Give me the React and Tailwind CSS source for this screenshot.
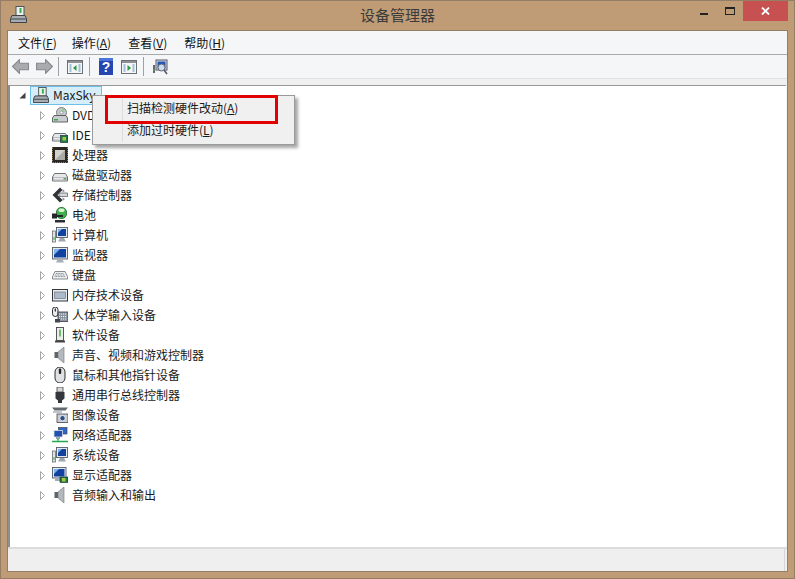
const font = { fontFamily: '"Noto Sans CJK SC", "Liberation Sans", sans-serif' };

const Computer = () => (
  <svg width="16" height="16" viewBox="0 0 16 16">
    <rect x="0.500" y="4" width="3" height="11" fill="#dfe5df" stroke="#6a6f74" strokeWidth=".8" />
    <rect x="1.500" y="10" width="1" height="3" fill="#35b04a" />
    <rect x="4.500" y="0.500" width="11" height="10" fill="#e4e9ef" stroke="#565c66" strokeWidth=".9" />
    <rect x="6" y="2" width="8" height="7" fill="#12429f" />
    <path d="M6 2h4l-4 4z" fill="#7fb4ee" />
    <path d="M8 11h4l2 3.500h-8z" fill="#9ea6b0" />
  </svg>
);
const Drive = ({ chip }) => (
  <svg width="16" height="16" viewBox="0 0 16 16">
    <path d="M2.500 6.500h11l2 3.500v4h-15v-4z" fill="#e6e8ea" stroke="#5f6468" strokeWidth=".9" />
    <rect x="1" y="10" width="14" height="3.500" fill="#b9bdc1" />
    <rect x="2" y="11" width="9" height="1.500" fill="#e8eaec" />
    <rect x="12" y="11" width="2" height="1.500" fill="#6f9a66" />
    {chip && <rect x="8.500" y="8.500" width="7.500" height="7" fill="#1f7a48" stroke="#123" strokeWidth=".6" />}
    {chip && <rect x="10.500" y="10" width="3.500" height="3.500" fill="#a6c83c" />}
  </svg>
);
const icons = {
  dvd: (
    <svg width="16" height="16" viewBox="0 0 16 16">
      <circle cx="9.500" cy="5.500" r="5" fill="#c4cacf" stroke="#666" strokeWidth=".8" />
      <path d="M9.500 1a4.500 4.500 0 0 1 4 3l-3 1z" fill="#8fd08f" />
      <circle cx="9.500" cy="5.500" r="1.500" fill="#fff" stroke="#777" strokeWidth=".6" />
      <path d="M2 8.500h12l1.500 2.500v4h-15v-4z" fill="#c9ccd0" stroke="#555" strokeWidth=".9" />
      <rect x="2" y="12" width="4" height="1.500" fill="#3aa84c" />
    </svg>
  ),
  ide: <Drive chip />,
  cpu: (
    <svg width="16" height="16" viewBox="0 0 16 16">
      <rect x="0" y="0" width="16" height="16" rx="1" fill="#2a2724" />
      <path d="M1 15.500h14M.5 1v14M15.500 1v14" stroke="#b89b52" strokeDasharray="1 1" strokeWidth=".8" />
      <rect x="3" y="3" width="10" height="10" fill="#a9a9a5" />
      <path d="M3 3h10l-10 10z" fill="#d2d2ce" />
    </svg>
  ),
  disk: <Drive />,
  storage: (
    <svg width="16" height="16" viewBox="0 0 16 16">
      <path d="M8 0.500l-7.500 7.500 7.500 7.500 2.500-2.500-5-5 5-5z" fill="#2f3338" />
      <path d="M7 6h8.500v3.500h-8.500z" fill="#d5d9dc" stroke="#555" strokeWidth=".7" />
      <path d="M10.500 2l2.500 2-2.500 1.500zM10.500 10.500l2.500 1.500-2.500 2z" fill="#8d9399" />
    </svg>
  ),
  battery: (
    <svg width="16" height="16" viewBox="0 0 16 16">
      <rect x="4.500" y="0.500" width="10" height="11" rx="4.500" fill="#3fb04a" stroke="#1f6a2c" strokeWidth=".8" />
      <rect x="6.500" y="1.500" width="6" height="3.500" rx="1.700" fill="#d6f2d0" />
      <path d="M0 6.500h5v5h-5zM5 8h6v2h-6z" fill="#23272a" />
      <path d="M3 13h10v2.500h-10z" fill="#2b2e31" />
    </svg>
  ),
  computer: <Computer />,
  monitor: (
    <svg width="16" height="16" viewBox="0 0 16 16">
      <rect x="0.500" y="0.500" width="15" height="11.500" fill="#e4e9ef" stroke="#565c66" strokeWidth=".9" />
      <rect x="2" y="2" width="12" height="8.500" fill="#12429f" />
      <path d="M2 2h6l-6 6z" fill="#7fb4ee" />
      <path d="M5.500 12.500h5l1.500 3h-8z" fill="#a5adb6" />
    </svg>
  ),
  keyboard: (
    <svg width="16" height="16" viewBox="0 0 16 16">
      <path d="M3 4.500h10l2.500 5v2.500h-15v-2.500z" fill="#eceef0" stroke="#6a6f74" strokeWidth=".8" />
      <path d="M4 6.500h8M3 8h10M2.500 9.500h11" stroke="#8a8f94" strokeWidth="1" strokeDasharray="1 .6" />
    </svg>
  ),
  memory: (
    <svg width="16" height="16" viewBox="0 0 16 16">
      <rect x="0.500" y="2.500" width="15" height="11.500" fill="#e6e9ec" stroke="#33383d" />
      <rect x="2.500" y="5" width="11" height="6.500" fill="#a9bac8" stroke="#667" strokeWidth=".6" />
    </svg>
  ),
  hid: (
    <svg width="16" height="16" viewBox="0 0 16 16">
      <rect x="0.500" y="0" width="5.500" height="9.500" rx="2.700" fill="#eceeef" stroke="#2c2f33" />
      <rect x="2.700" y="1.500" width="1.200" height="3" fill="#222" />
      <rect x="6" y="5" width="10" height="9.500" fill="#8d97a1" stroke="#334" strokeWidth=".8" />
      <path d="M7 7h8M7 9.500h8M7 12h8" stroke="#eef" strokeWidth="1" strokeDasharray="1 1" />
      <rect x="3" y="12" width="5" height="3.500" fill="#445" />
    </svg>
  ),
  software: (
    <svg width="16" height="16" viewBox="0 0 16 16">
      <rect x="4.500" y="0.500" width="7" height="13" fill="#eceeea" stroke="#444" strokeWidth=".9" />
      <rect x="7" y="2.500" width="2" height="7" fill="#68c070" />
      <rect x="3" y="13.500" width="10" height="2" fill="#444" />
    </svg>
  ),
  sound: (
    <svg width="16" height="16" viewBox="0 0 16 16">
      <rect x="2.500" y="5" width="3.500" height="6" fill="#5d6369" />
      <path d="M6 5l6-5v16l-6-5z" fill="#b4b9be" stroke="#6c7278" strokeWidth=".6" />
    </svg>
  ),
  mouse: (
    <svg width="16" height="16" viewBox="0 0 16 16">
      <path d="M3 5a5 5 0 0 1 10 0v6a5 5 0 0 1-10 0z" fill="#dfe1e3" stroke="#2c2f33" />
      <rect x="6.800" y="1.500" width="2.400" height="5.500" rx="1" fill="#222" />
    </svg>
  ),
  usb: (
    <svg width="16" height="16" viewBox="0 0 16 16">
      <rect x="5" y="0" width="6" height="5" fill="#d4d6d8" stroke="#444" strokeWidth=".8" />
      <path d="M3.500 5h9v6.500l-2.500 2v2.500h-4v-2.500l-2.500-2z" fill="#33373b" />
    </svg>
  ),
  image: (
    <svg width="16" height="16" viewBox="0 0 16 16">
      <path d="M0 0.500h16l-2.500 3h-11z" fill="#62686f" />
      <rect x="1" y="4" width="9" height="2" fill="#bfc5ca" />
      <rect x="5" y="7" width="11" height="8.500" fill="#c8ccd0" stroke="#445" strokeWidth=".8" />
      <circle cx="10.500" cy="11.200" r="2.700" fill="#2f4f80" stroke="#fff" strokeWidth=".8" />
    </svg>
  ),
  network: (
    <svg width="16" height="16" viewBox="0 0 16 16">
      <rect x="6.500" y="0.500" width="8.500" height="6.500" fill="#2f66c4" stroke="#445" strokeWidth=".7" />
      <rect x="2" y="3.500" width="8.500" height="6.500" fill="#1f52ac" stroke="#dde" strokeWidth=".8" />
      <path d="M6 10v3.500M0 14.500h16" stroke="#25a84a" strokeWidth="1.600" />
      <rect x="4" y="10" width="4" height="2" fill="#9aa2ac" />
    </svg>
  ),
  system: <Computer />,
  display: (
    <svg width="16" height="16" viewBox="0 0 16 16">
      <rect x="0.500" y="0.500" width="13.500" height="10.500" fill="#e4e9ef" stroke="#565c66" strokeWidth=".9" />
      <rect x="2" y="2" width="10.500" height="7.500" fill="#12429f" />
      <path d="M2 2h5l-5 5z" fill="#7fb4ee" />
      <path d="M3 11h7v3h-7z" fill="#a5adb6" />
      <rect x="8" y="10" width="8" height="5.500" fill="#1f7a48" stroke="#123" strokeWidth=".6" />
      <rect x="10" y="11" width="3.500" height="3.500" fill="#a6c83c" />
    </svg>
  ),
};

const rows = [
  ['DVD/CD-ROM 驱动器', 'dvd'],
  ['IDE ATA/ATAPI 控制器', 'ide'],
  ['处理器', 'cpu'],
  ['磁盘驱动器', 'disk'],
  ['存储控制器', 'storage'],
  ['电池', 'battery'],
  ['计算机', 'computer'],
  ['监视器', 'monitor'],
  ['键盘', 'keyboard'],
  ['内存技术设备', 'memory'],
  ['人体学输入设备', 'hid'],
  ['软件设备', 'software'],
  ['声音、视频和游戏控制器', 'sound'],
  ['鼠标和其他指针设备', 'mouse'],
  ['通用串行总线控制器', 'usb'],
  ['图像设备', 'image'],
  ['网络适配器', 'network'],
  ['系统设备', 'system'],
  ['显示适配器', 'display'],
  ['音频输入和输出', 'sound'],
];

const Sep = ({ className }) => <div className={`w-px h-[19px] bg-[#a0a0a0] ${className}`} />;
const Tb = ({ children, className }) => <div className={`w-[22px] h-[22px] flex items-center justify-center ${className}`}>{children}</div>;
const Arrow = ({ flip }) => (
  <svg width="17" height="15" viewBox="0 0 16 14" style={flip ? { transform: 'scaleX(-1)' } : undefined}>
    <path d="M0.500 7l6.500-6.500v3.500h8.500v6h-8.500v3.500z" fill="#a8acae" stroke="#85898c" />
  </svg>
);
const Panel = ({ play }) => (
  <svg width="16" height="14" viewBox="0 0 16 14">
    <rect x="0.500" y="0.500" width="15" height="13" fill="#f4f6f8" stroke="#6b7075" />
    <rect x="1" y="1" width="14" height="2" fill="#8b9095" />
    <path d="M2.500 5h2M2.500 7h2M2.500 9h2M2.500 11h2M11.500 5h2M11.500 7h2M11.500 9h2M11.500 11h2" stroke="#5b8ab8" />
    <path d={play ? 'M6.500 5l3.500 3-3.500 3z' : 'M9.500 5l-3.500 3 3.500 3z'} fill="#2a9a40" />
  </svg>
);

const Caret = () => (
  <svg width="7" height="9" viewBox="0 0 7 9">
    <path d="M1.500 0.500l4 4-4 4z" fill="#fff" stroke="#a6a6a6" />
  </svg>
);

const ManagerIcon = ({ size }) => (
  <svg width={size} height={size} viewBox="0 0 17 17">
    <rect x="6" y="0.500" width="8" height="9" fill="#eef0f0" stroke="#4e5458" />
    <rect x="9.500" y="2" width="2" height="5" fill="#35b04a" />
    <path d="M2 9.500h13l1.500 3v4h-16v-4z" fill="#a6acb1" stroke="#3e4448" />
    <rect x="1" y="12.500" width="15" height="1" fill="#3e4448" />
  </svg>
);

export default function App() {
  return (
    <div style={font} className="w-[795px] h-[579px] bg-[#bf9c76] border border-[#957e66] flex flex-col text-[12px] text-[#1a1a1a] overflow-hidden">
      <div className="h-[29px] shrink-0 grid grid-cols-[1fr_auto_1fr] items-start">
        <div className="ml-[9px] mt-[5px]">
          <ManagerIcon size={17} />
        </div>
        <div className="text-center text-[15px] leading-[28px] text-[#3b3b3b]">设备管理器</div>
        <div className="flex items-start justify-end mr-[6px]">
          <div className="w-[27px] h-[20px] flex items-center justify-center">
            <div className="w-[8px] h-[2px] bg-[#222] mt-[6px]" />
          </div>
          <div className="w-[26px] h-[20px] flex items-center justify-center">
            <div className="w-[10px] h-[8px] border border-[#222] border-t-2" />
          </div>
          <div className="w-[45px] h-[20px] bg-[#c75050] flex items-center justify-center">
            <svg width="9" height="8" viewBox="0 0 9 8"><path d="M1 0.500l7 7M8 0.500l-7 7" stroke="#fff" strokeWidth="1.800" /></svg>
          </div>
        </div>
      </div>
      <div className="mx-[6px] flex-1 flex flex-col border border-[#957e66] min-h-0 bg-[#f5f6f8]">
        <div className="h-[24px] shrink-0 flex items-center pl-[10px] border-b border-[#a9a9a9] text-[#111]">
          <span>文件(<u>F</u>)</span>
          <span className="ml-[15px]">操作(<u>A</u>)</span>
          <span className="ml-[17px]">查看(<u>V</u>)</span>
          <span className="ml-[17px]">帮助(<u>H</u>)</span>
        </div>
        <div className="h-[23px] shrink-0 flex items-center pl-[1px]">
          <Tb><Arrow /></Tb>
          <Tb className="ml-[2px]"><Arrow flip /></Tb>
          <Sep className="ml-[3px]" />
          <Tb className="ml-[5px]"><Panel /></Tb>
          <Sep className="ml-[3px]" />
          <Tb className="ml-[5px]">
            <svg width="14" height="17" viewBox="0 0 14 17">
              <rect width="14" height="17" fill="#2546b0" />
              <rect width="14" height="3" fill="#4a74d8" />
              <text x="7" y="14" textAnchor="middle" fontSize="14" fontWeight="700" fill="#fff" fontFamily="Liberation Sans">?</text>
            </svg>
          </Tb>
          <Tb className="ml-[1px]"><Panel play /></Tb>
          <Sep className="ml-[3px]" />
          <Tb className="ml-[5px]">
            <svg width="16" height="16" viewBox="0 0 16 16">
              <rect x="4" y="1" width="11" height="10" fill="#dde3ea" stroke="#556" />
              <rect x="5.500" y="2.500" width="8" height="7" fill="#2456b4" />
              <circle cx="9.500" cy="8.500" r="3.500" fill="#c8dcec" stroke="#667" />
              <path d="M12 11l3 4" stroke="#556" strokeWidth="1.500" />
              <rect x="1" y="6" width="2" height="8" fill="#667" />
              <rect x="1.500" y="10" width="1" height="2" fill="#4caf50" />
            </svg>
          </Tb>
        </div>
        <div className="h-[7px] shrink-0 bg-[#f0f0f0] border-t border-[#e2e2e2]" />
        <div className="flex-1 min-h-0 relative bg-white border-l-2 border-l-[#8a8f94] border-t border-t-[#9a9a9a] mr-[1px]">
          <div className="h-[18px] flex items-center">
            <div className="w-[10px] ml-[7px] mr-[3px] flex justify-center">
              <svg width="7" height="7" viewBox="0 0 7 7"><path d="M6.500 0.500v6h-6z" fill="#404040" /></svg>
            </div>
            <div className="h-[19px] w-[72px] shrink-0 flex items-center bg-[#d5eefa] border border-[#6fc0e8]">
              <div className="ml-[2px]">
                <ManagerIcon size={16} />
              </div>
              <span className="ml-[4px]">MaxSky</span>
            </div>
          </div>
          <div className="mt-[1px] flex flex-col">
            {rows.map(([label, icon], i) => (
              <div key={i} className="h-[20px] flex items-center pl-[29px]">
                <Caret />
                <div className="ml-[6px] w-[16px] h-[16px]">{icons[icon]}</div>
                <span className="ml-[4px] whitespace-nowrap">{label}</span>
              </div>
            ))}
          </div>
          <div className="absolute left-[82px] top-[9px] w-[203px] h-[50px] bg-[#f0f0f0] border border-[#9a9a9a] shadow-[3px_3px_3px_rgba(0,0,0,0.35)] flex flex-col z-10">
            <div className="absolute left-[29px] top-[2px] bottom-[2px] w-px bg-[#dcdcdc]" />
            <div className="h-[24px] flex items-center pl-[34px]">扫描检测硬件改动(<u>A</u>)</div>
            <div className="h-[20px] flex items-center pl-[34px]">添加过时硬件(<u>L</u>)</div>
            <div className="absolute left-[12px] top-[-1px] w-[173px] h-[29px] border-[3px] border-[#e30000]" />
          </div>
        </div>
        <div className="h-[24px] shrink-0 bg-[#efefef] border-t-2 border-t-[#dcdcdc] flex justify-end">
          <div className="w-px h-full bg-[#d6d6d6] mr-[2px]" />
        </div>
      </div>
      <div className="h-[6px] shrink-0" />
    </div>
  );
}
